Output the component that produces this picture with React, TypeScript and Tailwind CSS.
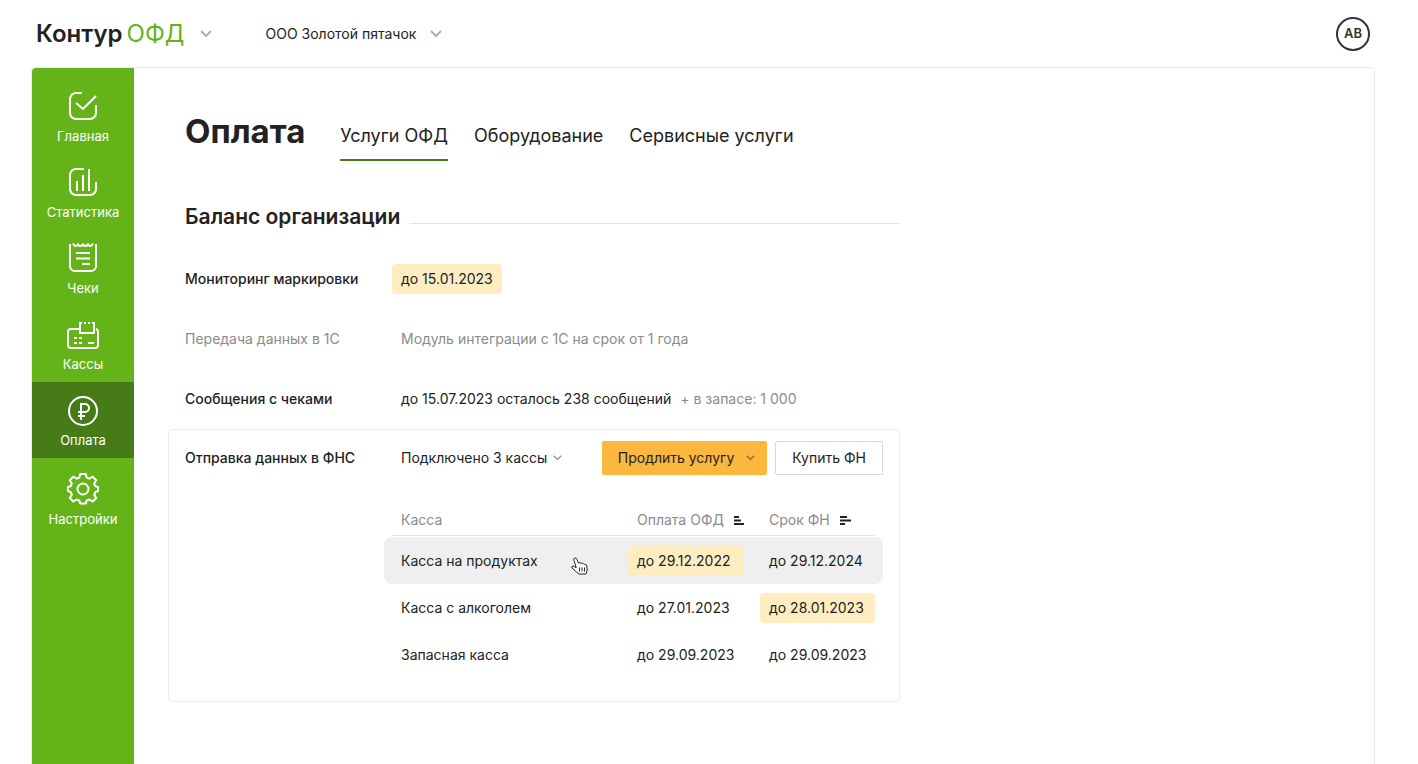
import { useState, type ReactNode } from "react";

interface NavItem {
  id: string;
  label: string;
  icon: ReactNode;
}

interface Register {
  name: string;
  paidUntil: string;
  paidSoon?: boolean;
  fnUntil: string;
  fnSoon?: boolean;
}

const navItems: NavItem[] = [
  {
    id: "home",
    label: "Главная",
    icon: (
      <>
        <path d="M15 3H9a6 6 0 0 0-6 6v14a6 6 0 0 0 6 6h14a6 6 0 0 0 6-6v-8" />
        <path d="M9 13l7 6L29 6" />
      </>
    ),
  },
  {
    id: "stats",
    label: "Статистика",
    icon: (
      <>
        <path d="M17 3H9a6 6 0 0 0-6 6v14a6 6 0 0 0 6 6h14a6 6 0 0 0 6-6v-7" />
        <path d="M10 15v10M16 9v16M22 3v22" />
      </>
    ),
  },
  {
    id: "receipts",
    label: "Чеки",
    icon: (
      <>
        <path d="M3 2v22a5 5 0 0 0 5 5h16a5 5 0 0 0 5-5V2" />
        <path d="M6 1.500q2.500 4.500 5 1 2.500 3 5 0 2.500 3 5 0 2.500 3.500 5-1" />
        <path d="M9 11h14M9 16.500h14M15 22h8" />
      </>
    ),
  },
  {
    id: "registers",
    label: "Кассы",
    icon: (
      <>
        <path d="M12 11H4a3 3 0 0 0-3 3v13a3 3 0 0 0 3 3h24a3 3 0 0 0 3-3V13a3 3 0 0 0-2-2" />
        <path d="M13 4v11h14V4" />
        <path d="M13 5h2M17 5h2M21 5h2M25 5h2" />
        <path d="M7 20h3M12 20h3M7 25h3M12 25h3M21 25h6" />
      </>
    ),
  },
  {
    id: "payment",
    label: "Оплата",
    icon: (
      <>
        <circle cx="16" cy="17" r="14" />
        <path d="M14 26V10h4a4 4 0 0 1 0 8h-7M11 22h7" />
      </>
    ),
  },
  {
    id: "settings",
    label: "Настройки",
    icon: (
      <g transform="translate(0 -1)">
        <path d="M13.3 2h5.4l1 3.6 2.6 1.1 3.4-2 3.500 3.500-2 3.400 1.100 2.600 3 .8v4l-3 1-1.100 2.600 2 3.400-3.500 3.500-3.400-2-2.600 1.100-1 3h-5.400l-1-3-2.600-1.100-3.400 2-3.500-3.500 2-3.400-1.100-2.600-3-1v-4l3-.8 1.100-2.600-2-3.400L6.300 4.700l3.400 2 2.600-1.100z" />
        <circle cx="16" cy="17" r="5.500" />
      </g>
    ),
  },
];

const tabs = ["Услуги ОФД", "Оборудование", "Сервисные услуги"];

const registers: Register[] = [
  {
    name: "Касса на продуктах",
    paidUntil: "до 29.12.2022",
    paidSoon: true,
    fnUntil: "до 29.12.2024",
  },
  {
    name: "Касса с алкоголем",
    paidUntil: "до 27.01.2023",
    fnUntil: "до 28.01.2023",
    fnSoon: true,
  },
  {
    name: "Запасная касса",
    paidUntil: "до 29.09.2023",
    fnUntil: "до 29.09.2023",
  },
];

function Chevron({ className }: { className?: string }) {
  return (
    <svg viewBox="0 0 12 8" fill="none" stroke="currentColor" strokeWidth="2" className={className}>
      <path d="M1 1l5 5 5-5" />
    </svg>
  );
}

function DateMark({ soon, children }: { soon?: boolean; children: ReactNode }) {
  return (
    <span
      className={`inline-block whitespace-nowrap rounded px-[9px] leading-[30px] ${soon ? "bg-[#ffedc2]" : ""}`}
    >
      {children}
    </span>
  );
}

function HandCursor() {
  return (
    <svg
      viewBox="0 0 17 18"
      className="absolute left-[187px] top-[20px] h-[18px] w-[17px]"
      fill="#fff"
      stroke="#222"
      strokeLinejoin="round"
    >
      <path d="M5 10L3 3.500Q2.300 1.500 3.700 1T6 2.200L7.300 6Q8 5 9 6.200 10 5 11.300 6.700 12.500 5.800 13.500 7.300 15.500 7 15.800 9L16.200 13 15 17H8L5.500 15 1 11Q.4 9 2 9T5 11z" />
      <path d="M8.500 10.500v4M11 10.500v4M13.500 10.500v4" />
    </svg>
  );
}

export default function App() {
  const [page, setPage] = useState("payment");
  const [tab, setTab] = useState(tabs[0]);
  const [open, setOpen] = useState(true);

  return (
    <div className="flex min-h-screen flex-col bg-white font-['Inter',sans-serif] text-sm text-[#222]">
      {/* Header */}
      <header className="flex h-[67px] items-center pl-9 pr-12">
        <button className="flex items-center text-2xl">
          <span className="font-semibold">Контур</span>
          <span className="ml-1 text-[#64b419]">ОФД</span>
          <Chevron className="ml-4 h-2 w-3 text-[#b0b0b0]" />
        </button>
        <button className="ml-[53px] flex items-center">
          ООО Золотой пятачок
          <Chevron className="ml-[14px] h-2 w-3 text-[#b0b0b0]" />
        </button>
        <button className="ml-auto h-[34px] w-[34px] rounded-full border-2 border-[#333] text-[13px] font-semibold text-[#333]">
          АВ
        </button>
      </header>

      <div className="ml-[31px] mr-[43px] flex flex-1 rounded-t border border-b-0 border-[#ececec]">
        {/* Sidebar */}
        <nav className="w-[102px] shrink-0 rounded-tl bg-[#64b419] pt-[10px]">
          {navItems.map((item) => (
            <button
              key={item.id}
              onClick={() => setPage(item.id)}
              className={`flex h-[76px] w-full flex-col items-center justify-center gap-1 pt-1 text-[13px] leading-5 text-white last:h-[81px] ${
                page === item.id ? "bg-[#477b17]" : ""
              }`}
            >
              <svg
                viewBox="0 0 32 32"
                className="h-8 w-8"
                fill="none"
                stroke="currentColor"
                strokeWidth="2"
              >
                {item.icon}
              </svg>
              {item.label}
            </button>
          ))}
        </nav>

        <main className="w-[766px] pl-[34px] pt-9">
          {/* Title and tabs */}
          <div className="flex items-start pl-[17px]">
            <h1 className="text-[33px] font-bold leading-[54px]">Оплата</h1>
            <div className="ml-[35px] flex gap-[26px] pt-[6px] text-lg">
              {tabs.map((name) => (
                <button
                  key={name}
                  onClick={() => setTab(name)}
                  className={`h-[51px] border-b-2 pt-[2px] ${
                    tab === name ? "border-[#477b17]" : "border-transparent"
                  }`}
                >
                  {name}
                </button>
              ))}
            </div>
          </div>

          <div className="mt-10 flex items-end gap-[10px] pl-[17px]">
            <h2 className="text-[21px] font-semibold leading-8">Баланс организации</h2>
            <div className="mb-[9px] flex-1 border-b border-[#e5e5e5]" />
          </div>

          {/* Services */}
          <dl className="mt-4 grid grid-cols-[207px_1fr] pl-[17px] leading-[60px]">
            <dt className="font-medium">Мониторинг маркировки</dt>
            <dd>
              <DateMark soon>до 15.01.2023</DateMark>
            </dd>
            <dt className="text-[#8b8b8b]">Передача данных в 1С</dt>
            <dd className="pl-[9px] text-[#8b8b8b]">Модуль интеграции с 1С на срок от 1 года</dd>
            <dt className="font-medium">Сообщения с чеками</dt>
            <dd className="pl-[9px]">
              до 15.07.2023 осталось 238 сообщений
              <span className="ml-[9px] text-[#8b8b8b]">+ в запасе: 1 000</span>
            </dd>
          </dl>

          {/* Connected registers */}
          <section className="rounded border border-[#ececec] pb-[23px] pl-4 pr-4 pt-[11px]">
            <div className="flex items-center">
              <h3 className="w-[216px] font-medium">Отправка данных в ФНС</h3>
              <button className="flex items-center" onClick={() => setOpen(!open)}>
                Подключено 3 кассы
                <Chevron className="ml-[6px] h-[6px] w-[9px] text-[#999]" />
              </button>
              <button className="ml-auto flex h-[34px] items-center rounded-xs bg-[#fcb73e] pl-4 pr-3">
                Продлить услугу
                <Chevron className="ml-3 h-[6px] w-[9px] text-[#9a7230]" />
              </button>
              <button className="ml-2 h-[34px] rounded-xs border border-[#d9d9d9] px-4">
                Купить ФН
              </button>
            </div>

            {open && (
              <table className="ml-auto mt-[30px] w-[499px] table-fixed border-separate border-spacing-0 text-left">
                <thead>
                  <tr className="text-[#8b8b8b]">
                    <th className="w-[244px] pb-px pl-2 font-normal">
                      <div className="border-b border-[#e5e5e5] pl-[9px] leading-[30px]">Касса</div>
                    </th>
                    <th className="w-[132px] pb-px font-normal">
                      <div className="flex items-center gap-[10px] border-b border-[#e5e5e5] pl-[9px] leading-[30px]">
                        Оплата ОФД
                        <svg viewBox="0 0 10 9" className="h-[9px] w-[10px] text-[#222]" fill="currentColor">
                          <path d="M0 0h5v2H0zM0 3.500h7v2H0zM0 7h10v2H0z" />
                        </svg>
                      </div>
                    </th>
                    <th className="pb-px pr-2 font-normal">
                      <div className="flex items-center gap-[10px] border-b border-[#e5e5e5] pl-[9px] leading-[30px]">
                        Срок ФН
                        <svg viewBox="0 0 11 9" className="h-[9px] w-[11px] text-[#222]" fill="currentColor">
                          <path d="M0 0h7v2H0zM0 3.500h11v2H0zM0 7h5v2H0z" />
                        </svg>
                      </div>
                    </th>
                  </tr>
                </thead>
                <tbody>
                  {registers.map((register, i) => (
                    <tr key={register.name} className={`h-[47px] ${i === 0 ? "bg-[#efefef]" : ""}`}>
                      <td className="relative rounded-l-lg pl-[17px]">
                        {register.name}
                        {i === 0 && <HandCursor />}
                      </td>
                      <td className="pr-4 *:w-full">
                        <DateMark soon={register.paidSoon}>{register.paidUntil}</DateMark>
                      </td>
                      <td className="rounded-r-lg pr-2 *:w-full">
                        <DateMark soon={register.fnSoon}>{register.fnUntil}</DateMark>
                      </td>
                    </tr>
                  ))}
                </tbody>
              </table>
            )}
          </section>
        </main>
      </div>
    </div>
  );
}
